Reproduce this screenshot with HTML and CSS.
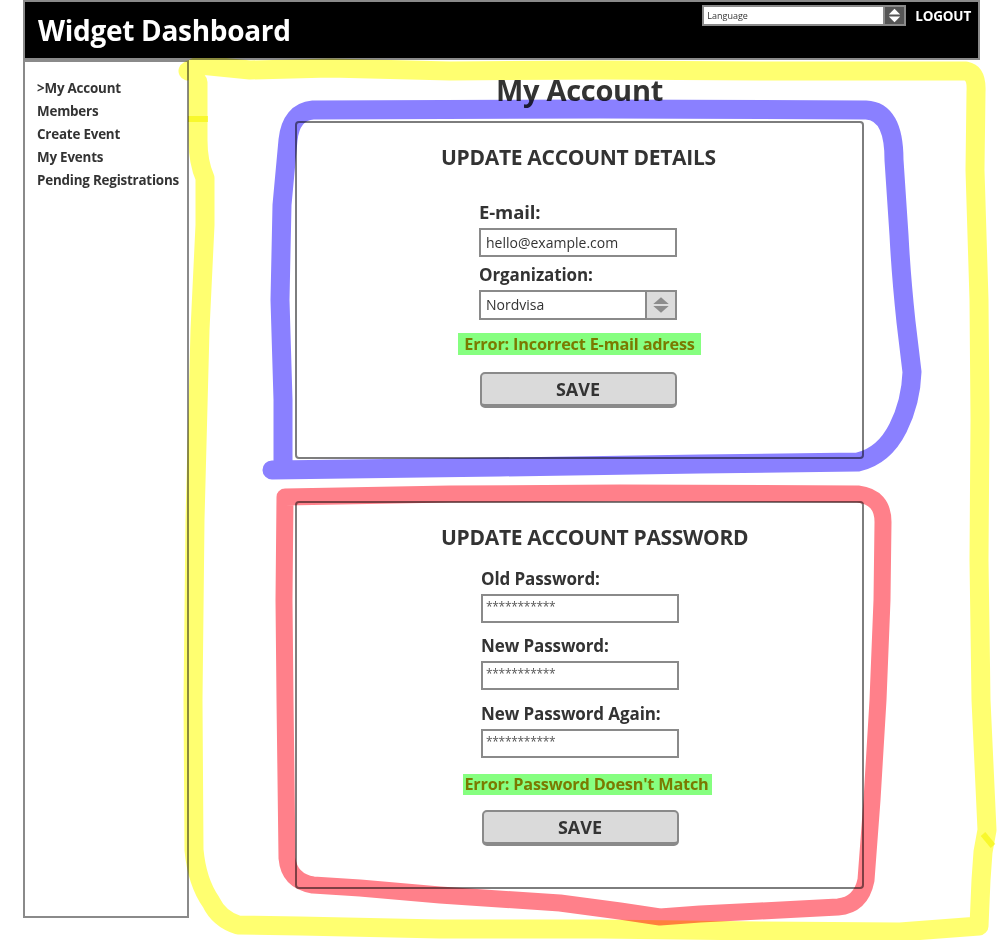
FILE: index.html
```html
<!DOCTYPE html>
<html lang="en">
<head>
<meta charset="utf-8">
<title>Widget Dashboard</title>
<link rel="stylesheet" href="styles.css">
</head>
<body>
<div class="page">
  <header class="topbar">
    <h1 class="brand">Widget Dashboard</h1>
    <div class="top-actions">
      <div class="lang-select">
        <span class="lang-text">Language</span>
        <span class="lang-spin">
          <svg viewBox="0 0 20 20" width="19" height="19"><polygon points="4,9 10,3 16,9" fill="#fff"/><polygon points="4,11 10,17 16,11" fill="#fff"/></svg>
        </span>
      </div>
      <span class="logout">LOGOUT</span>
    </div>
  </header>

  <div class="body-row">
    <nav class="sidebar">
      <a class="nav-item">&gt;My Account</a>
      <a class="nav-item">Members</a>
      <a class="nav-item">Create Event</a>
      <a class="nav-item">My Events</a>
      <a class="nav-item">Pending Registrations</a>
    </nav>

    <main class="content">
      <h2 class="page-title">My Account</h2>

      <section class="panel panel-details">
        <h3 class="panel-title">UPDATE ACCOUNT DETAILS</h3>
        <div class="form form-details">
          <label class="field-label label-email">E-mail:</label>
          <div class="text-input">hello@example.com</div>
          <label class="field-label label-org">Organization:</label>
          <div class="select-input">
            <span class="select-text">Nordvisa</span>
            <span class="select-spin">
              <svg viewBox="0 0 20 20" width="22" height="22"><polygon points="3,9 10,3 17,9" fill="#8c8c8c"/><polygon points="3,11 10,17 17,11" fill="#8c8c8c"/></svg>
            </span>
          </div>
        </div>
        <p class="error error-details">Error: Incorrect E-mail adress</p>
        <button class="save-btn save-details">SAVE</button>
      </section>

      <section class="panel panel-password">
        <h3 class="panel-title">UPDATE ACCOUNT PASSWORD</h3>
        <div class="form form-password">
          <label class="field-label label-old">Old Password:</label>
          <div class="text-input pw">***********</div>
          <label class="field-label label-new">New Password:</label>
          <div class="text-input pw">***********</div>
          <label class="field-label label-again">New Password Again:</label>
          <div class="text-input pw">***********</div>
        </div>
        <p class="error error-password">Error: Password Doesn't Match</p>
        <button class="save-btn save-password">SAVE</button>
      </section>
    </main>
  </div>

  <svg class="marker-overlay" viewBox="0 0 1000 940" width="1000" height="940">
    <path class="mark mark-yellow" d="M188,71 L200,65 L250,70 L330,68 L450,71 L600,70 L760,71 L900,71 L966,71 Q977,73 976,92 L975,170 L979,300 L980,420 L979,560 L981,700 L987,830 L983,852 L981,880 L979,926 L900,932 L760,931 L600,929 L440,929 L300,926 L238,925 Q219,919 211,902 Q197,882 194,850 L193,700 L195,520 L200,330 L205,225 L205,178 Q198,162 198,140 L198,82"/>
    <path class="mark mark-tick" d="M188,119 L208,119"/>
    <path class="mark mark-tick" d="M983,834 L993,846"/>
    <path class="mark mark-blue" d="M272,470 L500,467 L700,464 L858,462 Q884,456 898,428 Q911,402 912,372 L906,322 Q901,275 899,235 L894,160 Q894,111 866,110 L600,109 L313,110 Q291,112 288,140 L282,205 L280,300 L283,400 L283,470"/>
    <path class="mark mark-red" d="M285,497 L450,494 L620,493 L858,494 Q883,497 883,522 L882,600 L878,700 L872,800 L866,880 Q861,905 838,907 L760,911 L700,914 L660,917 L620,911 L560,903 L440,895 L360,888 L313,885 Q289,881 287,858 L285,700 L284,600 L285,497"/>
  </svg>
</div>
</body>
</html>
```

FILE: styles.css
```css
html, body {
  margin: 0;
  padding: 0;
  background: #fff;
}

body {
  font-family: "Open Sans", "Liberation Sans", sans-serif;
  color: #333;
}

.page {
  position: relative;
  width: 1000px;
  height: 940px;
  overflow: hidden;
}

/* Top bar */
.topbar {
  margin-left: 23px;
  width: 957px;
  height: 60px;
  box-sizing: border-box;
  border: 2px solid #8a8a8a;
  background: #000;
  display: flex;
  justify-content: space-between;
  align-items: flex-start;
}

.brand {
  margin: 9px 0 0 13px;
  font-size: 28px;
  line-height: 38px;
  font-weight: 700;
  color: #fff;
  letter-spacing: -0.3px;
}

.top-actions {
  display: flex;
  align-items: center;
  margin-top: 3px;
  margin-right: 7px;
}

.lang-select {
  display: flex;
  width: 204px;
  height: 21px;
  box-sizing: border-box;
  border: 2px solid #8a8a8a;
  background: #fff;
}

.lang-text {
  flex: 1;
  font-size: 9px;
  line-height: 17px;
  padding-left: 3px;
  color: #333;
}

.lang-spin {
  width: 19px;
  background: #555;
  border-left: 2px solid #8a8a8a;
  display: flex;
  align-items: center;
  justify-content: center;
}

.lang-spin svg {
  display: block;
}

.logout {
  margin-left: 9px;
  font-size: 13.5px;
  font-weight: 700;
  color: #fff;
  letter-spacing: -0.2px;
  line-height: 20px;
}

/* Body */
.body-row {
  display: flex;
  margin-left: 23px;
}

.sidebar {
  width: 166px;
  height: 858px;
  box-sizing: border-box;
  border: 2px solid #8a8a8a;
  padding: 15px 0 0 12px;
  display: flex;
  flex-direction: column;
}

.nav-item {
  font-size: 13.4px;
  line-height: 23px;
  font-weight: 700;
  color: #333;
  white-space: nowrap;
  letter-spacing: -0.2px;
}

.content {
  width: 569px;
  margin-left: 106px;
  display: flex;
  flex-direction: column;
}

.page-title {
  margin: 12px 0 0;
  text-align: center;
  font-size: 29px;
  line-height: 36px;
  font-weight: 700;
  color: #333;
  letter-spacing: -0.3px;
}

.panel {
  box-sizing: border-box;
  width: 569px;
  border: 2px solid #7d7d7d;
  border-radius: 4px;
  display: flex;
  flex-direction: column;
  align-items: center;
  padding-top: 22px;
}

.panel-details {
  margin-top: 13px;
  height: 338px;
}

.panel-password {
  margin-top: 42px;
  height: 388px;
}

.panel-title {
  align-self: flex-start;
  margin: 0 0 0 144px;
  font-size: 21px;
  line-height: 24px;
  font-weight: 700;
  color: #333;
  letter-spacing: -0.3px;
  white-space: nowrap;
}

.form {
  width: 198px;
  display: flex;
  flex-direction: column;
}

.form-details {
  margin-left: -3px;
}

.form-password {
  margin-left: 1px;
}

.field-label {
  font-size: 17px;
  line-height: 22px;
  font-weight: 700;
  color: #333;
  letter-spacing: -0.1px;
}

.label-email { margin-top: 32px; font-size: 18.5px; }
.label-org { margin-top: 7px; }
.label-old { margin-top: 19px; }
.label-new { margin-top: 12px; }
.label-again { margin-top: 13px; }

.text-input {
  box-sizing: border-box;
  height: 29px;
  margin-top: 5px;
  border: 2px solid #8a8a8a;
  background: #fff;
  padding-left: 5px;
  font-size: 14px;
  line-height: 25px;
  color: #333;
}

.form-password .text-input {
  margin-top: 4px;
}

.text-input.pw {
  padding-left: 3px;
  font-size: 12px;
  line-height: 21px;
  color: #555;
  letter-spacing: -0.3px;
}

.select-input {
  box-sizing: border-box;
  height: 30px;
  margin-top: 4px;
  border: 2px solid #8a8a8a;
  background: #fff;
  display: flex;
}

.select-text {
  flex: 1;
  padding-left: 5px;
  font-size: 14px;
  line-height: 26px;
  color: #333;
}

.select-spin {
  width: 28px;
  border-left: 2px solid #8a8a8a;
  background: #dcdcdc;
  display: flex;
  align-items: center;
  justify-content: center;
}

.select-spin svg {
  display: block;
}

.error {
  margin: 0;
  background: #86ff80;
  color: #7a7a00;
  font-size: 16.3px;
  font-weight: 700;
  line-height: 22px;
  padding: 0 6px;
  letter-spacing: -0.2px;
}

.error-details {
  margin-top: 13px;
}

.error-password {
  margin-top: 16px;
  line-height: 21px;
  margin-left: 16px;
  padding: 0 3px 0 1px;
}

.save-btn {
  box-sizing: border-box;
  width: 197px;
  height: 36px;
  border: 2px solid #8a8a8a;
  border-bottom-width: 4px;
  border-radius: 5px;
  background: #dadada;
  font-family: "Open Sans", "Liberation Sans", sans-serif;
  font-size: 18px;
  font-weight: 700;
  color: #333;
  padding: 0;
}

.save-details {
  margin-top: 17px;
  margin-left: -3px;
}

.save-password {
  margin-top: 15px;
  margin-left: 1px;
}

/* Marker highlights drawn over the mockup */
.marker-overlay {
  position: absolute;
  left: 0;
  top: 0;
  pointer-events: none;
}

.mark {
  fill: none;
  stroke-linecap: round;
  stroke-linejoin: round;
  mix-blend-mode: multiply;
}

.mark-yellow {
  stroke: #ffff70;
  stroke-width: 19;
}

.mark-tick {
  stroke: #f4f400;
  stroke-width: 6;
  stroke-linecap: butt;
  opacity: 0.6;
}

.mark-blue {
  stroke: #8a80ff;
  stroke-width: 19;
}

.mark-red {
  stroke: #ff808a;
  stroke-width: 17;
}
```
